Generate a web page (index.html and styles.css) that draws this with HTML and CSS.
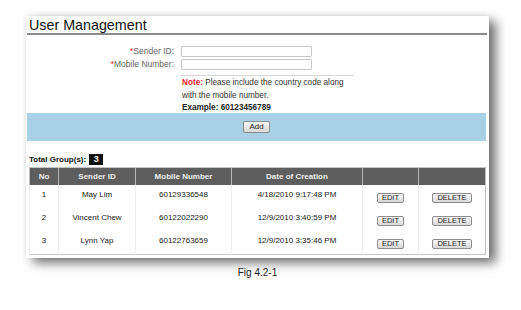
FILE: index.html
```html
<!DOCTYPE html>
<html lang="en">
<head>
  <meta charset="UTF-8">
  <title>User Management</title>
  <link rel="stylesheet" href="styles.css">
</head>
<body>
  <div class="card">
    <h1 class="title">User Management</h1>

    <form class="user-form">
      <label class="form-label" for="senderId"><span class="req">*</span>Sender ID:</label>
      <input class="form-input" type="text" id="senderId" name="senderId">

      <label class="form-label" for="mobile"><span class="req">*</span>Mobile Number:</label>
      <input class="form-input" type="text" id="mobile" name="mobile">

      <div class="note">
        <span class="note-tag">Note:</span> Please include the country code along with the mobile number.<br>
        <b>Example: 60123456789</b>
      </div>
    </form>

    <div class="action-band">
      <button type="button" class="btn">Add</button>
    </div>

    <div class="total">Total Group(s): <span class="total-count">3</span></div>

    <table class="groups">
      <thead>
        <tr>
          <th class="col-no">No</th>
          <th class="col-sender">Sender ID</th>
          <th class="col-mobile">Mobile Number</th>
          <th class="col-date">Date of Creation</th>
          <th class="col-edit"></th>
          <th></th>
        </tr>
      </thead>
      <tbody>
        <tr>
          <td>1</td>
          <td>May Lim</td>
          <td>60129336548</td>
          <td>4/18/2010 9:17:48 PM</td>
          <td class="cell-btn"><button type="button" class="btn btn-small">EDIT</button></td>
          <td class="cell-btn"><button type="button" class="btn btn-small">DELETE</button></td>
        </tr>
        <tr>
          <td>2</td>
          <td>Vincent Chew</td>
          <td>60122022290</td>
          <td>12/9/2010 3:40:59 PM</td>
          <td class="cell-btn"><button type="button" class="btn btn-small">EDIT</button></td>
          <td class="cell-btn"><button type="button" class="btn btn-small">DELETE</button></td>
        </tr>
        <tr>
          <td>3</td>
          <td>Lynn Yap</td>
          <td>60122763659</td>
          <td>12/9/2010 3:35:46 PM</td>
          <td class="cell-btn"><button type="button" class="btn btn-small">EDIT</button></td>
          <td class="cell-btn"><button type="button" class="btn btn-small">DELETE</button></td>
        </tr>
      </tbody>
    </table>
  </div>

  <p class="caption">Fig 4.2-1</p>
</body>
</html>
```

FILE: styles.css
```css
body {
  margin: 0;
  padding: 16px 0 0 26px;
  background: #ffffff;
  font-family: "Liberation Sans", Arial, sans-serif;
  font-size: 8px;
  color: #222;
}
.card {
  box-sizing: border-box;
  width: 463px;
  padding-bottom: 3px;
  background: #fff;
  box-shadow: 7px 5px 10px rgba(0, 0, 0, 0.55), 0 -1px 5px rgba(0, 0, 0, 0.08);
}
.title {
  margin: 0 2px 0 1px;
  padding: 1px 0 0 2px;
  font-size: 14.3px;
  font-weight: normal;
  line-height: 16px;
  color: #111;
  border-bottom: 2px solid #8a8a8a;
}
.user-form {
  display: grid;
  grid-template-columns: 148px 131px;
  column-gap: 7px;
  row-gap: 2px;
  margin-top: 11px;
  align-items: center;
}
.form-label {
  text-align: right;
  font-size: 8.5px;
  line-height: 11px;
  color: #666;
}
.req {
  color: #d22;
}
.form-input {
  box-sizing: border-box;
  height: 11px;
  width: 131px;
  padding: 0 2px;
  border: 1px solid #c8c8c8;
  border-radius: 1px;
  font-size: 8px;
}
.note {
  grid-column: 2;
  width: 172px;
  margin-top: 3px;
  padding: 1px 0 0 1px;
  border-top: 1px solid #d8d8d8;
  font-size: 8.2px;
  line-height: 12.5px;
  color: #333;
}
.note-tag {
  color: #e0252b;
  font-weight: bold;
}
.note b {
  color: #222;
}
.action-band {
  display: flex;
  justify-content: center;
  align-items: center;
  height: 28px;
  margin: -2px 3px 0 1px;
  background: #a9d1e6;
}
.btn {
  box-sizing: border-box;
  height: 12px;
  padding: 0 5px;
  border: 1px solid #8c8c8c;
  border-radius: 2px;
  background: linear-gradient(#f7f7f7, #d9d9d9);
  font-family: "Liberation Sans", Arial, sans-serif;
  font-size: 8px;
  line-height: 10px;
  color: #222;
}
.btn-small {
  height: 10px;
  font-size: 7.5px;
  line-height: 8px;
  padding: 0 4px;
}
.total {
  display: flex;
  align-items: center;
  gap: 3px;
  height: 11px;
  margin: 13px 0 0 3px;
  font-weight: bold;
  color: #111;
}
.total-count {
  display: inline-flex;
  justify-content: center;
  align-items: center;
  width: 14px;
  height: 11px;
  background: #111;
  color: #fff;
  font-size: 9px;
}
.groups {
  width: 457px;
  margin: 2px 3px 0 3px;
  border-collapse: collapse;
  border: 1px solid #c4c4c4;
  table-layout: fixed;
}
.groups th {
  height: 17px;
  padding: 0;
  background: #5e5e5e;
  color: #eee;
  font-weight: bold;
  border-left: 1px solid #bbb;
}
.groups td {
  height: 20px;
  padding: 0 0 3px;
  text-align: center;
  border-left: 1px solid #f0f0f0;
}
.groups td.cell-btn {
  padding: 3px 0 0;
}
.col-no { width: 28px; }
.col-sender { width: 76px; }
.col-mobile { width: 95px; }
.col-date { width: 130px; }
.col-edit { width: 55px; }
.caption {
  width: 463px;
  margin: 9px 0 0;
  text-align: center;
  font-size: 10px;
  line-height: 12px;
  color: #222;
}
```
